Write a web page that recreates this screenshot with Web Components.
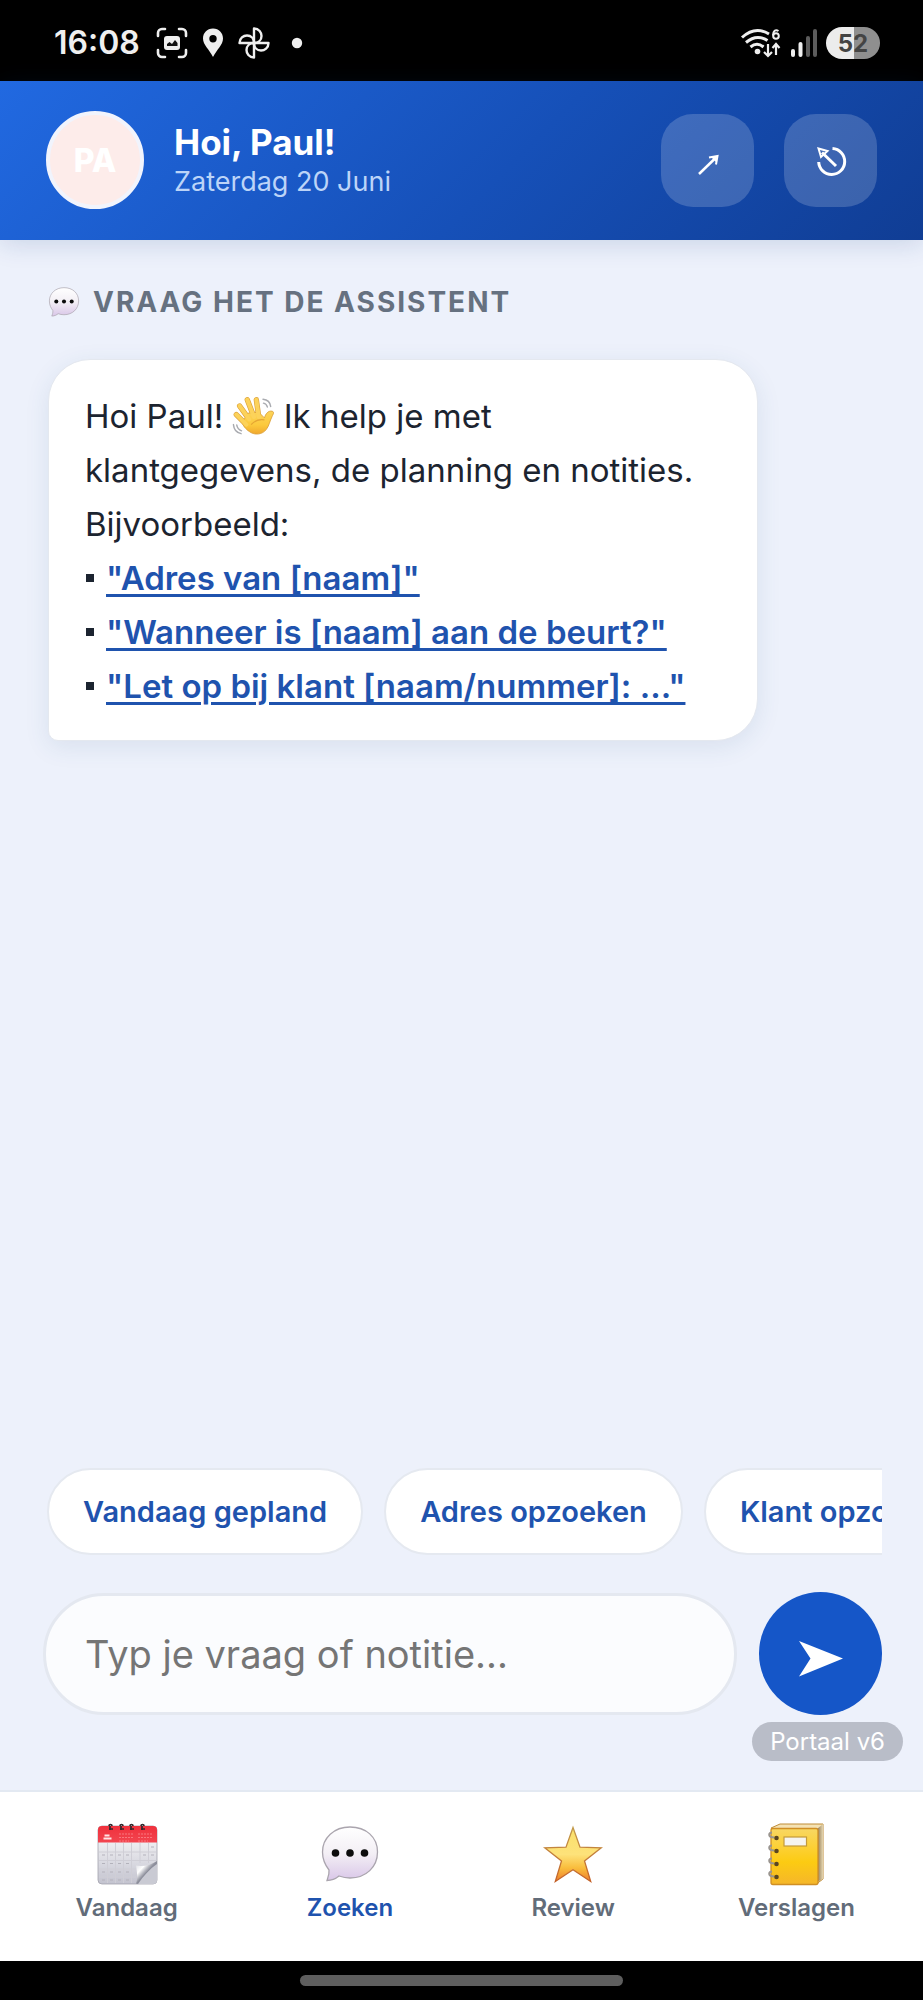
<!DOCTYPE html>
<html lang="nl">
<head>
<meta charset="utf-8">
<meta name="viewport" content="width=device-width, initial-scale=1">
<title>Portaal</title>
<style>
  html, body { margin: 0; height: 100%; }
  body { font-family: Inter, "Liberation Sans", sans-serif; color: #1c2430; background: #edf1fb; }
</style>
</head>
<body>
<portal-app></portal-app>

<script>
const define = (name, html) => {
  const template = document.createElement('template');
  template.innerHTML = html;
  customElements.define(name, class extends HTMLElement {
    constructor() {
      super();
      this.attachShadow({ mode: 'open' }).appendChild(template.content.cloneNode(true));
    }
  });
};

/* ---------- icons ---------- */
const bubble = `
  <defs><linearGradient id="b" x1="0" y1="0" x2="0" y2="1"><stop offset="0" stop-color="#fff"/><stop offset=".5" stop-color="#f3eff5"/><stop offset="1" stop-color="#d9c6e8"/></linearGradient></defs>
  <path d="M32 5C16 5 4.500 16 4.500 30c0 8 3 13.500 6.500 18 .5 4-1 7.500-2 10.500 5 0 9-2 12-4.500 3.500 1.200 7 2 11 2 16 0 27.500-11 27.500-26S48 5 32 5z" fill="url(#b)" stroke="#aaa5ae" stroke-width="1.300"/>
  <g fill="#0c0c0c"><circle cx="17.500" cy="31" r="3.800"/><circle cx="32" cy="31" r="3.800"/><circle cx="46.500" cy="31" r="3.800"/></g>`;

const art = {
  bubble,
  calendar: `
  <defs><linearGradient id="p" x1="0" y1="0" x2="0" y2="1"><stop offset="0" stop-color="#fff"/><stop offset="1" stop-color="#c3c3cf"/></linearGradient>
  <linearGradient id="r" x1="0" y1="0" x2="0" y2="1"><stop offset="0" stop-color="#f0303c"/><stop offset="1" stop-color="#f24550"/></linearGradient>
  <linearGradient id="c" x1="0" y1="0" x2="1" y2="1"><stop offset="0" stop-color="#d5d6de"/><stop offset=".3" stop-color="#fff"/><stop offset=".5" stop-color="#8c8e9b"/></linearGradient></defs>
  <rect x="3" y="4" width="59" height="58" rx="4" fill="url(#p)" stroke="#a2a2ad" stroke-width=".8"/>
  <path d="M3 20.500V8a4 4 0 0 1 4-4h51a4 4 0 0 1 4 4v12.500z" fill="url(#r)"/>
  <path d="M4 30h57M4 38.500h57M4 47h37M4 55h37M12.500 21v40M20.500 21v40M28.500 21v40M36.500 21v40M45 21v20M53.500 21v20" stroke="#cfced6" stroke-width="1"/>
  <path d="M7 33h3M15 33h3M23 33h3M31 33h3M7 41.500h3M15 41.500h3M23 41.500h3M31 41.500h3M7 50h3M15 50h3M23 50h3M31 50h3M7 58h3M15 58h3M23 58h3M31 58h3M48 33h3M56 33h3M56 25h3" stroke="#b3b2bb" stroke-width="1.200"/>
  <path d="M8.500 16.500h8M9.500 13.500h5" stroke="#ffe6e6" stroke-width="2.200"/>
  <path d="M24 12h15M24 15.500h15M24 19h10M43 12h15M43 15.500h15M43 19h10" stroke="#f9767e" stroke-width="1" stroke-dasharray="2 1"/>
  <path d="M43 62C48 54 55 47 62 41.500V58a4 4 0 0 1-4 4z" fill="#c9cad3"/>
  <path d="M41 61.500c2-5 1-12 0-18 7 1.500 15-.5 21-4.500v3C55 47 48 54 43 62z" fill="url(#c)"/>
  <g stroke="#33282c" stroke-width="1.700" fill="none"><path d="M14 4c0-2 3-2 3 0M14 7h4M15 4v4M25 4c0-2 3-2 3 0M25 7h4M26 4v4M35 4c0-2 3-2 3 0M35 7h4M36 4v4M46 4c0-2 3-2 3 0M46 7h4M47 4v4"/></g>`,
  star: `
  <defs><linearGradient id="s" x1="0" y1="0" x2="0" y2="1"><stop offset="0" stop-color="#fbe06c"/><stop offset=".5" stop-color="#fde27a"/><stop offset=".75" stop-color="#f9bd3c"/><stop offset="1" stop-color="#ee7d2d"/></linearGradient>
  <linearGradient id="k" x1="0" y1="0" x2="0" y2="1"><stop offset="0" stop-color="#c29a4a"/><stop offset="1" stop-color="#c4622a"/></linearGradient></defs>
  <path d="M32 5.500l7 19.700 21.200.6L43.500 39l6.200 20.500L32 47.800 14.300 59.500 20.500 39 3.800 25.800l21.200-.6z" fill="url(#s)" stroke="url(#k)" stroke-width="1.300"/>`,
  book: `
  <defs><linearGradient id="y" x1="0" y1="0" x2="0" y2="1"><stop offset="0" stop-color="#f8d763"/><stop offset=".3" stop-color="#fcd13a"/><stop offset=".6" stop-color="#fccb12"/><stop offset="1" stop-color="#f5b62a"/></linearGradient>
  <linearGradient id="e" x1="0" y1="0" x2="1" y2="0"><stop offset="0" stop-color="#8b7350"/><stop offset="1" stop-color="#e5d6b0"/></linearGradient></defs>
  <path d="M7 6l9-4h43v55l-6 4.500z" fill="#f4e2b4" stroke="#bf8c36"/>
  <path d="M53 7l6-5v55l-6 3z" fill="url(#e)"/>
  <rect x="7" y="6.500" width="47" height="56" rx="2" fill="url(#y)" stroke="#d08f24" stroke-width="1.300"/>
  <rect x="20" y="15" width="22.500" height="9" fill="#f5f4f0" stroke="#c49a3a" stroke-width="1.200"/>
  <g fill="#5a4620"><circle cx="12.500" cy="16" r="2.300"/><circle cx="12.500" cy="29" r="2.300"/><circle cx="12.500" cy="42" r="2.300"/><circle cx="12.500" cy="55" r="2.300"/></g>
  <g fill="none" stroke="#9a9590" stroke-width="2"><path d="M8 10.500c-4 0-4 5 2 5M8 23.500c-4 0-4 5 2 5M8 36.500c-4 0-4 5 2 5M8 49.500c-4 0-4 5 2 5"/></g>`
};

for (const [name, body] of Object.entries(art)) {
  define('icon-' + name, `
    <style>:host{display:block;width:64px;height:64px}svg{display:block;width:100%;height:100%}</style>
    <svg viewBox="0 0 64 64" aria-hidden="true">${body}</svg>`);
}

define('icon-wave', `
  <style>:host{display:inline-block;width:42px;height:42px;vertical-align:-9px}svg{display:block}</style>
  <svg width="42" height="42" viewBox="0 0 44 44" role="img" aria-label="Zwaaiende hand">
    <defs><linearGradient id="h" gradientUnits="userSpaceOnUse" x1="0" y1="14" x2="0" y2="43"><stop offset="0" stop-color="#fcd660"/><stop offset=".6" stop-color="#fcc93c"/><stop offset="1" stop-color="#eea12b"/></linearGradient></defs>
    <g fill="none" stroke="#dba03a" stroke-width="5.600" stroke-linecap="round"><path d="M4.500 20.500L15 31M8 11.500l10 14M16 5l7 18M25.500 5l2.500 18"/></g>
    <path d="M11 28l6-9 11-1 6 6c1-4 4-8 8-7 3 .8 1 3.200 0 5.500-2.500 5-3 9.500-6 13.500-4 5.500-12 6.500-17.500 2.500C14 35.500 11 32 11 28z" fill="url(#h)" stroke="#dba03a" stroke-width=".9"/>
    <g fill="none" stroke="#fcd25a" stroke-width="4.300" stroke-linecap="round"><path d="M4.500 20.500L15 31M8 11.500l10 14M16 5l7 18M25.500 5l2.500 18"/></g>
    <path d="M20 31c4-4.500 8-6 14-5" fill="none" stroke="#e5a633" stroke-width="1.200"/>
    <g fill="none" stroke="#a9abb0" stroke-width="1.500" stroke-linecap="round"><path d="M32.500 4.500c5 .5 7.500 3.500 8 7.500M33 8.500c2.500.5 3.500 2 4 4M1.500 31c.5 5.500 3.500 8.500 8 9.500M5 31.500c.5 3 2.500 5 5 6"/></g>
  </svg>`);

/* ---------- phone chrome ---------- */
define('status-bar', `
  <style>
    :host { display: flex; align-items: center; justify-content: space-between; height: 81px; padding: 4px 43px 0 54px; box-sizing: border-box; background: #000; color: #efefef; }
    .group { display: flex; align-items: center; }
    time { font-size: 32px; line-height: 40px; font-weight: 600; margin-right: 16px; }
    svg { display: block; }
    .left svg { margin-right: 14px; }
    .signal { margin: 0 8px; }
    .battery { width: 54px; height: 32px; border-radius: 16px; background: linear-gradient(90deg, #ececec 52%, #8f8f8f 52%); color: #444; font-size: 24px; line-height: 33px; font-weight: 700; text-align: center; }
  </style>
  <div class="group left">
    <time>16:08</time>
    <svg width="32" height="32" viewBox="0 0 32 32"><path d="M2 9V6a4 4 0 0 1 4-4h3M23 2h3a4 4 0 0 1 4 4v3M30 23v3a4 4 0 0 1-4 4h-3M9 30H6a4 4 0 0 1-4-4v-3" fill="none" stroke="#efefef" stroke-width="2.600" stroke-linecap="round"/><rect x="8" y="9" width="16" height="14" rx="3" fill="#efefef"/><path d="M11 19v-2l2.500-2 2.500 2 3-4 2.500 3v3z" fill="#111"/></svg>
    <svg width="22" height="32" viewBox="0 0 22 32"><path d="M11 1.500C5 1.500 1 6 1 11.500 1 18 7 22 11 30c4-8 10-12 10-18.500C21 6 17 1.500 11 1.500zm0 6.500a3.700 3.700 0 1 1 0 7.400A3.700 3.700 0 0 1 11 8z" fill="#efefef"/></svg>
    <svg width="32" height="32" viewBox="0 0 32 32"><g fill="none" stroke="#efefef" stroke-width="2.400" stroke-linejoin="round"><path d="M16 16V1.500c5 0 7.500 4 7.500 7.500 0 4-3 7-7.500 7z"/><path d="M16 16h14.500c0 5-4 7.500-7.500 7.500-4 0-7-3-7-7.500z"/><path d="M16 16v14.500c-5 0-7.500-4-7.500-7.500 0-4 3-7 7.500-7z"/><path d="M16 16H1.500c0-5 4-7.500 7.500-7.500 4 0 7 3 7 7.500z"/></g></svg>
    <svg width="26" height="32" viewBox="0 0 26 32"><circle cx="13" cy="16" r="5.200" fill="#efefef"/></svg>
  </div>
  <div class="group">
    <svg width="42" height="32" viewBox="0 0 42 32"><g fill="none" stroke="#efefef" stroke-width="3"><path d="M2 10.500Q15-1.500 29 7"/><path d="M6 15.500q10.500-9 21.500-2"/><path d="M10.500 20q6.500-5.500 13 0"/><path d="M28 17v12M24 25l4 4 4-4M36 28V17M32.500 21l3.500-4 3.500 4" stroke-width="2.200"/><path d="M38.500 4c-3-2-5.500 0-5.500 4.500" stroke-width="2"/><circle cx="36" cy="9" r="2.800" stroke-width="2"/></g><circle cx="17.500" cy="24.500" r="2.800" fill="#efefef"/></svg>
    <svg class="signal" width="28" height="32" viewBox="0 0 28 32"><g fill="#efefef"><rect x="1" y="22" width="4" height="8" rx="2"/><rect x="8.500" y="15" width="4" height="15" rx="2"/></g><g fill="#5c5c5c"><rect x="16" y="9" width="4" height="21" rx="2"/><rect x="23" y="2" width="4" height="28" rx="2"/></g></svg>
    <div class="battery">52</div>
  </div>`);

define('gesture-bar', `
  <style>
    :host { display: flex; align-items: center; justify-content: center; height: 39px; background: #000; }
    div { width: 35%; height: 11px; border-radius: 6px; background: #5e5e5e; }
  </style><div></div>`);

/* ---------- header ---------- */
define('portal-header', `
  <style>
    :host { display: flex; align-items: center; gap: 30px; padding: 30px 46px 31px; background: linear-gradient(135deg, #2169e1 0%, #1650b8 55%, #103d94 100%); box-shadow: 0 4px 24px rgba(20, 60, 130, .16); color: #fff; position: relative; }
    .avatar { box-sizing: border-box; width: 98px; height: 98px; border: 4px solid #f1f4fd; border-radius: 50%; background: #fdecea; display: grid; place-items: center; font-size: 32px; font-weight: 800; }
    .who { flex: 1; min-width: 0; }
    h1 { margin: 0; font-size: 35px; line-height: 44px; font-weight: 700; }
    p { margin: 0; font-size: 27px; line-height: 36px; color: #bcd4f8; }
    .actions { display: flex; gap: 30px; }
    button { width: 93px; height: 93px; padding: 0; border: 0; border-radius: 32px; background: rgba(255, 255, 255, .18); display: grid; place-items: center; }
    svg { display: block; fill: none; stroke: #fff; stroke-width: 2.500; }
  </style>
  <div class="avatar">PA</div>
  <div class="who"><h1>Hoi, Paul!</h1><p>Zaterdag 20 Juni</p></div>
  <div class="actions">
    <button type="button" aria-label="Openen"><svg width="46" height="46" viewBox="0 0 46 46"><path d="M14 37L30 21.500"/><path d="M24 20.500l8.500-1.500-1.500 8.500" stroke-width="2"/><path d="M26 20l6-1-1 6z" fill="#fff" stroke="none"/></svg></button>
    <button type="button" aria-label="Uitloggen"><svg width="46" height="46" viewBox="0 0 46 46"><path d="M24.500 11.500a13 13 0 1 1-13.800 13.500" stroke-width="3"/><path d="M28 29L14 15.500" stroke-width="3"/><path d="M10.500 11.500l9 2.500-6.500 6z" stroke-width="2"/></svg></button>
  </div>`);

/* ---------- chat ---------- */
define('chat-message', `
  <style>
    :host { display: block; width: 86%; max-width: 710px; box-sizing: border-box; padding: 29px 36px 27px; background: #fff; border: 1px solid #e4e8ef; border-radius: 42px 42px 42px 10px; box-shadow: 0 6px 24px rgba(40, 90, 130, .1); font-size: 33px; line-height: 54px; }
  </style><slot></slot>`);

define('chat-prompt', `
  <style>
    :host { display: flex; align-items: center; gap: 12px; }
    :host::before { content: ""; width: 8px; height: 8px; margin-left: 1px; background: #1c2430; }
    a { color: #1f53ae; font-weight: 600; text-decoration: underline; text-decoration-thickness: 3px; text-underline-offset: 4px; white-space: nowrap; }
  </style><a href="#"><slot></slot></a>`);

define('chip-button', `
  <style>
    :host { display: block; flex: none; }
    button { height: 87px; padding: 0 34px; border: 2px solid #e5e9f0; border-radius: 44px; background: #fff; color: #1f53ae; font: 600 29px/40px Inter, "Liberation Sans", sans-serif; white-space: nowrap; }
  </style><button type="button"><slot></slot></button>`);

define('chat-composer', `
  <style>
    :host { display: flex; align-items: center; gap: 22px; }
    input { flex: 1; min-width: 0; height: 122px; box-sizing: border-box; padding: 0 39px; border: 3px solid #e4e8f0; border-radius: 61px; background: #fbfcfe; color: #1c2430; font: 400 38px/48px Inter, "Liberation Sans", sans-serif; outline: 0; }
    input::placeholder { color: #757575; opacity: 1; }
    button { width: 123px; height: 123px; padding: 0; border: 0; border-radius: 50%; background: #1556c8; display: grid; place-items: center; }
    svg { display: block; }
  </style>
  <input type="text" aria-label="Vraag of notitie" placeholder="Typ je vraag of notitie...">
  <button type="submit" aria-label="Versturen"><svg width="62" height="62" viewBox="0 0 62 62"><path d="M9 18l44 17.500L9 53.500l11.500-18z" fill="#fff"/></svg></button>`);

define('assistant-view', `
  <style>
    :host { display: flex; flex-direction: column; flex: 1; padding: 38px 41px 29px 43px; }
    h2 { display: flex; align-items: center; gap: 12px; margin: 0 0 33px; padding-left: 4px; font-size: 28px; line-height: 48px; font-weight: 700; letter-spacing: 2px; color: #667180; text-transform: uppercase; }
    h2 icon-bubble { width: 34px; height: 34px; }
    chat-message { margin-left: 5px; }
    .space { flex: 1; min-height: 48px; }
    .chips { display: flex; gap: 21px; padding-left: 4px; overflow: hidden; }
    chat-composer { margin-top: 37px; }
    .version { align-self: flex-end; margin: 7px -21px 0 0; padding: 0 18px; border-radius: 20px; background: #b9bdc8; color: #fff; font-size: 24px; line-height: 39px; }
  </style>
  <h2><icon-bubble></icon-bubble>Vraag het de assistent</h2>
  <chat-message>
    Hoi Paul! <icon-wave></icon-wave> Ik help je met klantgegevens, de planning en notities. Bijvoorbeeld:
    <chat-prompt>"Adres van [naam]"</chat-prompt>
    <chat-prompt>"Wanneer is [naam] aan de beurt?"</chat-prompt>
    <chat-prompt>"Let op bij klant [naam/nummer]: ..."</chat-prompt>
  </chat-message>
  <div class="space"></div>
  <div class="chips">
    <chip-button>Vandaag gepland</chip-button>
    <chip-button>Adres opzoeken</chip-button>
    <chip-button>Klant opzoeken</chip-button>
  </div>
  <chat-composer></chat-composer>
  <span class="version">Portaal v6</span>`);

/* ---------- navigation ---------- */
define('nav-item', `
  <style>
    :host { display: block; color: #626c79; }
    :host([active]) { color: #1f53ae; }
    a { display: flex; flex-direction: column; align-items: center; gap: 5px; color: inherit; text-decoration: none; font-size: 24px; line-height: 34px; font-weight: 600; }
  </style><a href="#"><slot name="icon"></slot><slot></slot></a>`);

define('portal-nav', `
  <style>
    :host { display: block; background: #fff; border-top: 2px solid #e3e9f2; }
    nav { display: grid; grid-template-columns: repeat(4, 1fr); padding: 30px 15px 36px; }
  </style>
  <nav>
    <nav-item><icon-calendar slot="icon"></icon-calendar>Vandaag</nav-item>
    <nav-item active><icon-bubble slot="icon"></icon-bubble>Zoeken</nav-item>
    <nav-item><icon-star slot="icon"></icon-star>Review</nav-item>
    <nav-item><icon-book slot="icon"></icon-book>Verslagen</nav-item>
  </nav>`);

define('portal-app', `
  <style>:host { display: flex; flex-direction: column; min-height: 100vh; }</style>
  <status-bar></status-bar>
  <portal-header></portal-header>
  <assistant-view></assistant-view>
  <portal-nav></portal-nav>
  <gesture-bar></gesture-bar>`);
</script>
</body>
</html>
